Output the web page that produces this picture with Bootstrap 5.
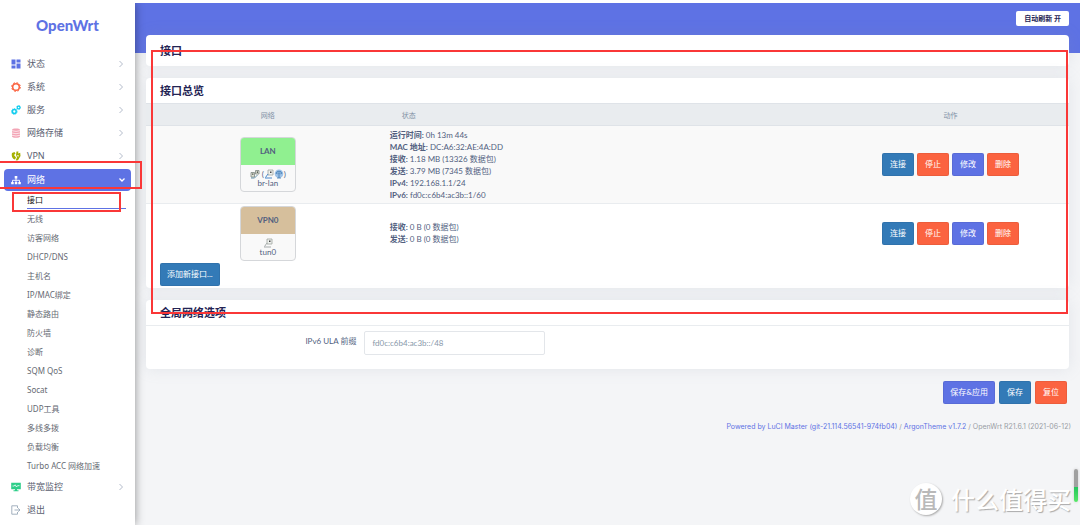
<!DOCTYPE html>
<html lang="zh-CN">
<head>
<meta charset="utf-8">
<meta name="viewport" content="width=device-width, initial-scale=1">
<title>OpenWrt - 接口</title>
<link href="https://cdn.jsdelivr.net/npm/bootstrap@5.3.0/dist/css/bootstrap.min.css" rel="stylesheet">
<style>
  :root { --argon: #5e72e4; --ink: #242454; --blue: #337ab7; --warn: #fb6340; --mark: #fa3737; }
  body { font: 8px/12px Lato, "Noto Sans CJK SC", sans-serif; color: #525f7f; background: #f4f5f7; }
  a { text-decoration: none; }
  .shell { border-top: 3px solid #fff; box-shadow: inset 0 1px #e3e3e8; min-height: 100vh; }

  /* sidebar */
  .side { width: 135px; flex: none; z-index: 2; background: #fff; box-shadow: 0 0 9px rgba(0,0,0,.42); clip-path: inset(0 -12px 0 0); font-family: "Noto Sans", "Noto Sans CJK SC", sans-serif; }
  .brand { height: 49px; padding-top: 12px; font: 900 15px/20px Lato, sans-serif; color: var(--argon); }
  .item { height: 23px; padding: 0 11px; gap: 6px; font-size: 9px; color: #5a5e70; }
  .item svg { width: 10px; height: 10px; flex: none; }
  .item .arrow { width: 6px; height: 8px; margin-left: auto; fill: none; stroke: #b4bccb; }
  .item-on { height: 22px; margin: 2px 4px 0; padding: 0 7px; border-radius: 4px; background: var(--argon); color: #fff; }
  .item-on .arrow { width: 8px; stroke: #fff; margin-right: -2px; }
  .sub { margin-top: -1px; }
  .sub a { height: 19px; line-height: 19px; margin: 0 9px 0 27px; display: block; color: #666a73; white-space: nowrap; }
  .sub .sub-on { color: #111; box-shadow: inset 0 -1px var(--argon); }
  .frame { position: absolute; border: 2px solid var(--mark); pointer-events: none; z-index: 5; }
  .frame-net { left: -2px; right: -7px; top: 109px; height: 28px; }
  .frame-if { left: 12px; right: 14px; top: 140px; height: 20px; }
  .frame-main { left: 16px; right: 12px; top: 47px; height: 264px; }

  /* content */
  .hero { height: 50px; background: var(--argon); padding: 8px 11px; }
  .refresh { height: 15px; padding: 0 8px; border: 0; border-radius: 2px; background: #fff; color: var(--ink); font-size: 7px; font-weight: 700; line-height: 15px; }
  .page { padding: 0 11px; margin-top: -18px; }
  .panel { border-radius: 4px; background: #fff; box-shadow: 0 0 16px rgba(136,152,170,.16); margin-bottom: 12px; }
  .panel h2 { font-size: 11px; line-height: 16px; font-weight: 700; color: var(--ink); margin: 0; padding: 5px 14px 4px; }
  .panel .title { padding: 8px 14px 7px; }
  .ifs { width: 100%; table-layout: fixed; }
  .ifs th { background: #e9ecef; height: 22px; font-size: 7px; font-weight: 400; color: #8090a5; border: solid #dfe3e8; border-width: 1px 0; }
  .ifs td { height: 59px; padding: 0; }
  .ifs .row-a td { height: 78px; background: #f9f9f9; border-bottom: 1px solid #e9ecef; }
  .ifs b { font-weight: 700; }
  .c-net { width: 26.4%; } .c-act { width: 25.7%; }
  .ifbox { width: 56px; height: 55px; margin: 0 auto; border: 1px solid #d5d7da; border-radius: 4px; background: #f9f9f9; overflow: hidden; text-align: center; line-height: 9px; }
  .ifhead { height: 27px; line-height: 27px; font-weight: 700; }
  .ifhead-lan { background: #90f090; } .ifhead-vpn { background: #d6bf9c; }
  .ifbox svg { width: 10px; height: 10px; vertical-align: -2px; }
  .act { height: 23px; min-width: 32px; padding: 0 7px; border: 0; border-radius: 2px; color: #fff; font-size: 8px; line-height: 23px; box-shadow: inset 0 0 0 1px rgba(0,0,0,.06); white-space: nowrap; }
  .act-p { background: var(--argon); } .act-b { background: var(--blue); } .act-r { background: var(--warn); }
  .gap-a { gap: 3px; }
  .adder { padding: 0 14px 2px; }
  .savebar { gap: 4px; padding-right: 2px; }
  .ula { min-height: 44px; padding: 5px 0; border-top: 1px solid #e9ecef; gap: 8px; }
  .ula label { width: 22.8%; text-align: right; line-height: 20px; }
  .ula input { width: 181px; height: 24px; border: 1px solid #e3e6ea; border-radius: 2px; padding: 0 7px; color: #8898aa; font-size: 8px; }
  .foot { font: 7px/12px Inter, sans-serif; color: #999da5; padding: 17px 9px 0; }
  .foot a { color: var(--argon); }

  /* overlays */
  .stamp { position: absolute; right: 9px; bottom: 9px; gap: 9px; font: 500 24px/34px "Noto Sans CJK SC", sans-serif; color: #fff; text-shadow: 1px 1px 1px #aaa; }
  .stamp-dot { width: 32px; height: 32px; border-radius: 50%; background: #fff; box-shadow: 1px 1px 2px #aaa; color: #b9b9b9; font-size: 23px; line-height: 31px; text-align: center; text-shadow: none; }
  .meter { position: absolute; right: 2px; bottom: 23px; width: 4px; height: 33px; border-radius: 2px; background: linear-gradient(#a0a0a0 54%, #23c45c 54%, #58e868); box-shadow: 0 0 3px #ccc; }
</style>
</head>
<body>
<svg class="d-none" aria-hidden="true">
  <symbol id="right" viewBox="0 0 6 8"><path d="M1.5 1 4.5 4 1.5 7"/></symbol>
  <symbol id="port" viewBox="0 0 10 10"><path d="M4 1h5v5H4z" fill="#eef1ee" stroke="#a0a59f" stroke-width=".8"/><path d="M6 2.500h1.500V4H6z" fill="#444"/><path d="M1 9h7M1.500 8.500 4 5" stroke="#a5aaab" fill="none"/></symbol>
  <symbol id="port-blue" viewBox="0 0 10 10"><path d="M4 1h5v5H4z" fill="#eef1ee" stroke="#a0a59f" stroke-width=".8"/><path d="M6 2.500h1.500V4H6z" fill="#444"/><path d="M1 9h7M1.500 8.500 4 5" stroke="#4987c9" fill="none"/></symbol>
  <symbol id="bridge" viewBox="0 0 10 10"><path d="M1 3.500h3.500V8H1zM5.500 1.500H9V5H5.500z" fill="#dfe4d4" stroke="#7e8783" stroke-width=".8"/><path d="M2.200 4.500h1.200v1.200H2.200zM6.800 2.500H8v1.200H6.800z" fill="#333"/><path d="M1 9h3.500L7.500 6" fill="none" stroke="#6793a8"/></symbol>
  <symbol id="wifi" viewBox="0 0 10 10"><circle cx="5" cy="4.800" r="4.300" fill="#9dc2e8"/><path d="M2.200 5a2.800 2.800 0 0 1 5.600 0M3.700 5.200a1.300 1.300 0 0 1 2.600 0M5 5v4M3 9h4" fill="none" stroke="#3e78ae" stroke-width=".8"/></symbol>
</svg>
<div class="shell d-flex position-relative">
  <nav class="side position-relative">
    <div class="brand text-center">OpenWrt</div>
    <div class="position-relative">
      <a href="#" class="item d-flex align-items-center"><svg viewBox="0 0 10 10" fill="#5e72e4"><path d="M.5.5h4v5h-4zM5.5.5h4v3h-4zM5.5 4.500h4v5h-4zM.5 6.500h4v3h-4z"/></svg>状态<svg class="arrow"><use href="#right"/></svg></a>
      <a href="#" class="item d-flex align-items-center"><svg viewBox="0 0 10 10" fill="none" stroke="#fb6340"><circle cx="5" cy="5" r="3.300" stroke-width="1.500"/><circle cx="5" cy="5" r="4.400" stroke-width="1" stroke-dasharray="1.730 1.730"/></svg>系统<svg class="arrow"><use href="#right"/></svg></a>
      <a href="#" class="item d-flex align-items-center"><svg viewBox="0 0 10 10" fill="none" stroke="#11cdef"><circle cx="3.300" cy="6.500" r="1.900" stroke-width="1.500"/><circle cx="3.300" cy="6.500" r="2.900" stroke-dasharray="1.100 1.100" stroke-width=".9"/><circle cx="7.600" cy="2.500" r="1.400" stroke-width="1.200"/><circle cx="7.600" cy="2.500" r="2.100" stroke-dasharray=".8 .8" stroke-width=".7"/></svg>服务<svg class="arrow"><use href="#right"/></svg></a>
      <a href="#" class="item d-flex align-items-center"><svg viewBox="0 0 10 10" fill="#f3a4b5"><path d="M1 1.800C1-.1 9-.1 9 1.800v6.700c0 1.800-8 1.800-8 0z"/><path d="M1 2.700q4 1.400 8 0M1 5q4 1.400 8 0M1 7.300q4 1.400 8 0" fill="none" stroke="#fff" stroke-width=".7"/></svg>网络存储<svg class="arrow"><use href="#right"/></svg></a>
      <a href="#" class="item d-flex align-items-center"><svg viewBox="0 0 10 10" fill="#a5b000"><path d="M1 2 3.500 1l1 1.500L3 4l2 2.500L4 8.500C1.500 8 .2 5 1 2z"/><path d="M5.500.5h2l-.5 2 2.200-.7L9.500 5 7 9.300 4.700 9.500 6 6.300 5 4z"/><path d="m6 4 2 .5L7 6" fill="#fff"/></svg>VPN<svg class="arrow"><use href="#right"/></svg></a>
      <a href="#" class="item item-on d-flex align-items-center"><svg viewBox="0 0 10 10" fill="#fff"><path d="M3.700 1h2.600v2.500H3.700zM.2 7h2.500v2.300H.2zM3.800 7h2.500v2.300H3.800zM7.300 7h2.500v2.300H7.300z"/><path d="M5 3v4M1.500 7V5.300h7V7" fill="none" stroke="#fff" stroke-width=".9"/></svg>网络<svg class="arrow" viewBox="0 0 8 8"><path d="M1.500 2.500 4 5l2.500-2.500" stroke-width="1.300"/></svg></a>
      <div class="sub">
        <a href="#" class="sub-on">接口</a><a href="#">无线</a><a href="#">访客网络</a><a href="#">DHCP/DNS</a><a href="#">主机名</a><a href="#">IP/MAC绑定</a><a href="#">静态路由</a><a href="#">防火墙</a><a href="#">诊断</a><a href="#">SQM QoS</a><a href="#">Socat</a><a href="#">UDP工具</a><a href="#">多线多拨</a><a href="#">负载均衡</a><a href="#">Turbo ACC 网络加速</a>
      </div>
      <a href="#" class="item d-flex align-items-center"><svg viewBox="0 0 10 10" fill="#2dce89"><path d="M.2.800h9.600v6.400H6v1.100h1.500v1h-5v-1H4V7.200H.2z"/><path d="M1.500 4h1.700l1-1.200L5.500 5l1-1.300h2" fill="none" stroke="#fff" stroke-width=".8"/></svg>带宽监控<svg class="arrow"><use href="#right"/></svg></a>
      <a href="#" class="item d-flex align-items-center"><svg viewBox="0 0 10 10" fill="none" stroke="#9aa9b9" stroke-width=".9"><path d="M6.500 3V.8H.8v8.400h5.700V7M3.500 5H9M7.200 3.300 9 5 7.200 6.700"/></svg>退出</a>
      <div class="frame frame-net"></div>
      <div class="frame frame-if"></div>
    </div>
  </nav>

  <main class="flex-grow-1 position-relative">
    <header class="hero d-flex justify-content-end align-items-start"><button type="button" class="refresh">自动刷新 开</button></header>
    <div class="page">
      <section class="panel"><h2 class="title">接口</h2></section>
      <section class="panel">
        <h2>接口总览</h2>
        <table class="ifs">
          <thead><tr><th class="c-net text-center">网络</th><th style="padding-left:12px">状态</th><th class="c-act text-center">动作</th></tr></thead>
          <tbody>
            <tr class="row-a">
              <td><div class="ifbox"><div class="ifhead ifhead-lan">LAN</div><div class="pt-1"><svg><use href="#bridge"/></svg> (<svg><use href="#port-blue"/></svg><svg><use href="#wifi"/></svg>)<br>br-lan</div></div></td>
              <td><b>运行时间:</b> 0h 13m 44s<br><b>MAC 地址:</b> DC:A6:32:AE:4A:DD<br><b>接收:</b> 1.18 MB (13326 数据包)<br><b>发送:</b> 3.79 MB (7345 数据包)<br><b>IPv4:</b> 192.168.1.1/24<br><b>IPv6:</b> fd0c:c6b4:ac3b::1/60</td>
              <td><div class="d-flex justify-content-center gap-a"><button type="button" class="act act-b">连接</button><button type="button" class="act act-r">停止</button><button type="button" class="act act-p">修改</button><button type="button" class="act act-r">删除</button></div></td>
            </tr>
            <tr>
              <td><div class="ifbox"><div class="ifhead ifhead-vpn">VPN0</div><div class="pt-1"><svg><use href="#port"/></svg><br>tun0</div></div></td>
              <td><b>接收:</b> 0 B (0 数据包)<br><b>发送:</b> 0 B (0 数据包)</td>
              <td><div class="d-flex justify-content-center gap-a"><button type="button" class="act act-b">连接</button><button type="button" class="act act-r">停止</button><button type="button" class="act act-p">修改</button><button type="button" class="act act-r">删除</button></div></td>
            </tr>
          </tbody>
        </table>
        <div class="adder d-flex"><button type="button" class="act act-b">添加新接口...</button></div>
      </section>
      <section class="panel">
        <h2>全局网络选项</h2>
        <div class="ula d-flex align-items-start"><label for="ula">IPv6 ULA 前缀</label><input id="ula" type="text" value="fd0c:c6b4:ac3b::/48"></div>
      </section>
      <div class="savebar d-flex justify-content-end"><button type="button" class="act act-p">保存&amp;应用</button><button type="button" class="act act-b">保存</button><button type="button" class="act act-r">复位</button></div>
    </div>
    <footer class="foot text-end"><a href="#">Powered by LuCI Master (git-21.114.56541-974fb04)</a> / <a href="#">ArgonTheme v1.7.2</a> / OpenWrt R21.6.1 (2021-06-12)</footer>
    <div class="frame frame-main"></div>
  </main>
  <div class="stamp d-flex align-items-center"><span class="stamp-dot">值</span><span>什么值得买</span></div>
  <div class="meter"></div>
</div>
<script src="https://cdn.jsdelivr.net/npm/bootstrap@5.3.0/dist/js/bootstrap.bundle.min.js"></script>
</body>
</html>
